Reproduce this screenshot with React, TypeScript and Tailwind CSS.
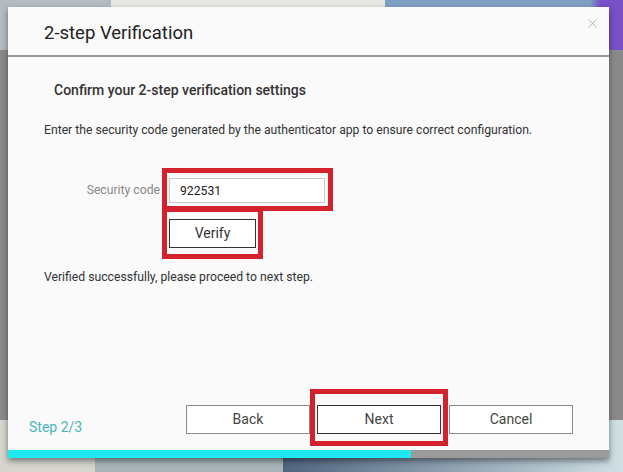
import { X } from 'lucide-react'

function RedMark({ className }: { className: string }) {
  return <span className={`pointer-events-none absolute border-[5px] border-[#d3212d] ${className}`} />
}

function FooterButton({ label, strong }: { label: string; strong?: boolean }) {
  return (
    <button
      className={`h-[29px] w-[124px] bg-white text-[14px] text-[#444] border ${
        strong ? 'border-[#333]' : 'border-[#8a8a8a]'
      }`}
    >
      {label}
    </button>
  )
}

export default function App() {
  return (
    <div className="relative w-[623px] h-[472px] overflow-hidden font-['Roboto',sans-serif]">
      {/* dimmed page behind the dialog */}
      <div className="flex flex-col h-full">
        <div className="h-[50px] bg-[linear-gradient(to_right,#b3bbc3_0,#b3bbc3_111px,#e6e6e2_111px,#e6e6e2_385px,#7f9fc2_385px,#7f9fc2_590px,#7a50c8_600px)]" />
        <div className="flex-1 bg-[#8a8a8a]" />
        <div className="h-[52px] bg-[linear-gradient(to_right,#d6d6cf_0,#d6d6cf_95px,#a9b5b8_95px,#a9b5b8_283px,#4f6580_283px,#d0e0e4_623px)]" />
      </div>

      {/* dialog */}
      <div className="absolute left-[8px] top-[7px] w-[601px] h-[451px] flex flex-col bg-[#fafafa] shadow-[0_3px_6px_rgba(0,0,0,0.45)]">
        <div className="flex h-[50px] shrink-0 border-b-2 border-[#9a9a9a]">
          <h1 className="pl-[36px] pt-[14px] text-[18.5px] leading-[24px] text-[#222]">2-step Verification</h1>
          <X className="ml-auto mr-[9px] mt-[9px] text-[#9a9a9a]" size={15} strokeWidth={1.2} />
        </div>

        <div className="flex flex-col pl-[36px]">
          <p className="mt-[24px] ml-[10px] text-[14px] leading-[18px] font-medium text-[#333]">
            Confirm your 2-step verification settings
          </p>
          <p className="mt-[23px] text-[12.2px] leading-[16px] text-[#333]">
            Enter the security code generated by the authenticator app to ensure correct configuration.
          </p>

          <div className="mt-[40px] flex items-center gap-[9px]">
            <span className="w-[116px] text-right text-[12.2px] text-[#888]">Security code</span>
            <div className="relative">
              <input
                readOnly
                value="922531"
                className="block h-[25px] w-[156px] border border-[#c8c8c8] bg-white pl-[10px] text-[12.2px] text-[#222] outline-none"
              />
              <RedMark className="-left-[7px] -right-[8px] -top-[10px] -bottom-[8px]" />
            </div>
          </div>

          <div className="mt-[16px] ml-[125px] self-start relative">
            <button className="block h-[29px] w-[87px] border border-[#333] bg-white text-[14px] text-[#333]">
              Verify
            </button>
            <RedMark className="-left-[7px] -right-[7px] -top-[12px] -bottom-[11px]" />
          </div>

          <p className="mt-[21px] text-[12.2px] leading-[16px] text-[#333]">
            Verified successfully, please proceed to next step.
          </p>
        </div>

        <div className="mt-auto flex h-[29px] items-start">
          <span className="w-[178px] pl-[21px] pt-[13px] text-[14px] leading-[18px] text-[#4bb5c2]">Step 2/3</span>
          <FooterButton label="Back" />
          <div className="relative ml-[7px]">
            <FooterButton label="Next" strong />
            <RedMark className="-left-[7px] -right-[7px] -top-[16px] -bottom-[12px]" />
          </div>
          <div className="ml-[8px]">
            <FooterButton label="Cancel" />
          </div>
        </div>

        <div className="mt-[16px] flex h-[8px] shrink-0">
          <div className="w-[403px] bg-[#1ee8f0]" />
          <div className="flex-1 bg-[#9a9a9a]" />
        </div>
      </div>
    </div>
  )
}
